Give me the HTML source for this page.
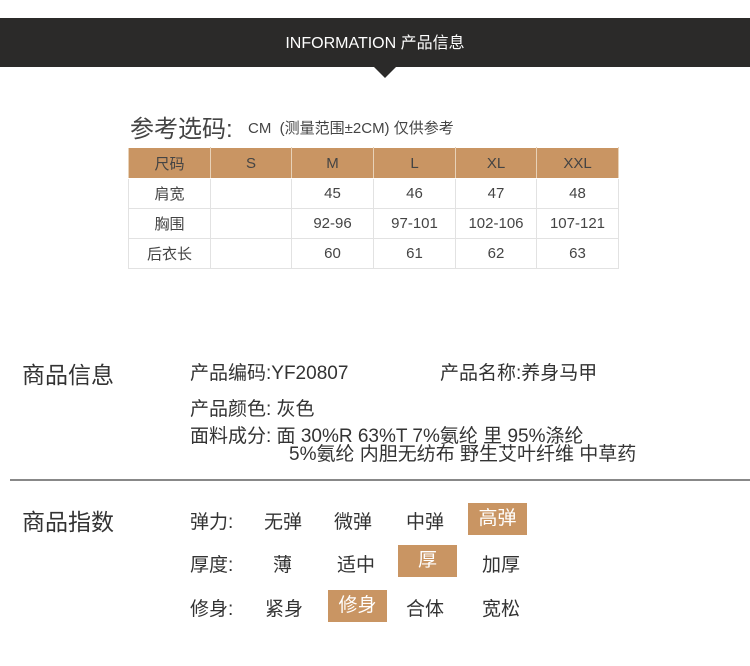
<!DOCTYPE html><html><head><meta charset="utf-8"><style>
body{margin:0;width:750px;height:666px;background:#fff;position:relative;font-family:"Liberation Sans","Noto Sans CJK SC",sans-serif;color:#333;overflow:hidden}
.a{position:absolute;white-space:nowrap}
.bar{position:absolute;left:0;top:18px;width:750px;height:49px;background:#2b2a29;color:#fff;font-size:16px;text-align:center;line-height:52px}
.tri{position:absolute;left:374px;top:67px;width:0;height:0;border-left:11px solid transparent;border-right:11px solid transparent;border-top:11px solid #2b2a29}
table{position:absolute;left:128px;top:147px;border-collapse:collapse;font-size:15px;color:#444}
td{border:1px solid #e2e2e2;text-align:center;height:29px;padding:0}
tr.h td{background:#c99563;border-color:#fff #e8d2b8;height:30px}
.chip{position:absolute;background:#c99563;color:#fff;text-align:center;font-size:19px}
.f18{font-size:19px}
</style></head><body>
<div class="bar">INFORMATION 产品信息</div><div class="tri"></div>
<div class="a" style="left:130px;top:109px;font-size:24px;color:#444">参考选码:</div>
<div class="a" style="left:248px;top:117px;font-size:15px;color:#444">CM&nbsp; (测量范围±2CM) 仅供参考</div>
<table>
<tr class="h"><td style="width:81px">尺码</td><td style="width:80px">S</td><td style="width:81px">M</td><td style="width:81px">L</td><td style="width:80px">XL</td><td style="width:81px">XXL</td></tr>
<tr><td>肩宽</td><td></td><td>45</td><td>46</td><td>47</td><td>48</td></tr>
<tr><td>胸围</td><td></td><td>92-96</td><td>97-101</td><td>102-106</td><td>107-121</td></tr>
<tr><td>后衣长</td><td></td><td>60</td><td>61</td><td>62</td><td>63</td></tr>
</table>
<div class="a" style="left:22px;top:356px;font-size:23px">商品信息</div>
<div class="a f18" style="left:190px;top:358px">产品编码:YF20807</div>
<div class="a f18" style="left:440px;top:358px">产品名称:养身马甲</div>
<div class="a f18" style="left:190px;top:394px">产品颜色: 灰色</div>
<div class="a f18" style="left:190px;top:428px;line-height:18px">面料成分: 面 30%R 63%T 7%氨纶 里 95%涤纶<br><span style="padding-left:99px">5%氨纶 内胆无纺布 野生艾叶纤维 中草药</span></div>
<div class="a" style="left:10px;top:479px;width:740px;height:2px;background:#888"></div>
<div class="a" style="left:22px;top:503px;font-size:23px">商品指数</div>
<div class="a f18" style="left:190px;top:507px">弹力:</div>
<div class="a f18" style="left:264px;top:507px">无弹</div>
<div class="a f18" style="left:334px;top:507px">微弹</div>
<div class="a f18" style="left:406px;top:507px">中弹</div>
<div class="chip" style="left:468px;top:503px;width:59px;height:32px;line-height:32px">高弹</div>
<div class="a f18" style="left:190px;top:550px">厚度:</div>
<div class="a f18" style="left:273px;top:550px">薄</div>
<div class="a f18" style="left:337px;top:550px">适中</div>
<div class="chip" style="left:398px;top:545px;width:59px;height:32px;line-height:32px">厚</div>
<div class="a f18" style="left:482px;top:550px">加厚</div>
<div class="a f18" style="left:190px;top:594px">修身:</div>
<div class="a f18" style="left:265px;top:594px">紧身</div>
<div class="chip" style="left:328px;top:590px;width:59px;height:32px;line-height:32px">修身</div>
<div class="a f18" style="left:406px;top:594px">合体</div>
<div class="a f18" style="left:482px;top:594px">宽松</div>
</body></html>
